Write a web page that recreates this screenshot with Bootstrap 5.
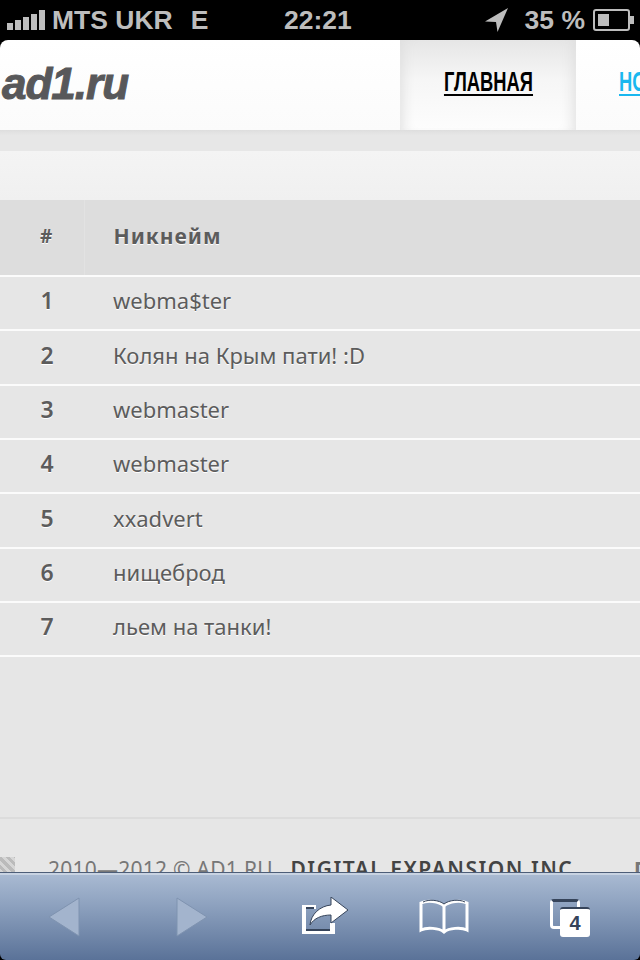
<!DOCTYPE html>
<html lang="ru">
<head>
  <meta charset="UTF-8">
  <title>ad1.ru</title>
  <meta name="viewport" content="width=device-width, initial-scale=1">
  <link href="https://cdn.jsdelivr.net/npm/bootstrap@5.3.2/dist/css/bootstrap.min.css" rel="stylesheet">
  <style>
    html, body { height: 960px; overflow: hidden; background: #000; }
    body { font-family: "Noto Sans", "Liberation Sans", sans-serif; }
    .phone { width: 640px; height: 960px; }

    .status-bar { height: 40px; background: #000; color: #bdbdbd; font: bold 26.5px/40px "Liberation Sans", Arial, sans-serif; padding: 0 5px 0 7px; }
    .status-left { width: 277px; flex-shrink: 0; }
    .status-time { width: 110px; flex-shrink: 0; }
    .status-right { flex: 1; }
    .signal { gap: 2px; height: 20px; margin-right: 7px; }
    .signal i { display: block; width: 6px; background: #bdbdbd; }
    .net-type { margin-left: 18px; }

    .site-head { height: 90px; background: linear-gradient(#fff, #fbfbfb); border-radius: 8px 8px 0 0; overflow: hidden; flex-shrink: 0; }
    .site-logo { width: 400px; flex-shrink: 0; color: #58585a; font: italic bold 44px/88px "Liberation Sans", Arial, sans-serif; letter-spacing: -1px; padding-left: 2px; -webkit-text-stroke: 1px #58585a; }
    .menu-item { height: 90px; flex-shrink: 0; font: bold 27px/84px "Liberation Sans", sans-serif; }
    .menu-active { width: 176px; text-align: center; color: #000; background: linear-gradient(#e6e6e6, #f6f6f6 45%, #fdfdfd); box-shadow: inset 12px 0 14px -10px #dedede, inset -12px 0 14px -10px #dedede; }
    .menu-active span { text-decoration: underline; text-underline-offset: 3px; transform: scaleX(.68); display: inline-block; }
    .menu-link { color: #1ab7ef; padding-left: 43px; white-space: nowrap; }
    .menu-link span { text-decoration: underline; text-underline-offset: 3px; display: inline-block; transform: scaleX(.68); transform-origin: left center; }

    .page-body { background: #e6e6e6; flex: 1; min-height: 0; overflow: hidden; }
    .top-band { height: 21px; background: linear-gradient(#dedede, #e7e7e7 25%); }
    .search-band { height: 49px; background: linear-gradient(#f4f4f4, #f0f0f0); }

    .nick-table { width: 640px; table-layout: fixed; margin: 0; color: #5c5c5c; font-size: 22px; }
    .nick-table th, .nick-table td { background: transparent; color: inherit; padding: 0; vertical-align: middle; border: 0; border-bottom: 2px solid #fbfbfb; text-shadow: 0 1px 0 #fff; box-shadow: none; }
    .nick-table thead th { height: 76px; background: #dddddd; font-size: 21px; font-weight: bold; letter-spacing: 1px; padding-bottom: 2px; }
    .nick-table tbody td { height: 54.35px; padding-bottom: 5px; }
    .nick-num { width: 84px; text-align: center; padding-left: 10px !important; font-weight: 600; font-size: 23px; }
    .nick-table thead .nick-num { border-right: 1px solid #e2e2e2; font-size: 19px; }
    .nick-name { padding-left: 29px !important; }

    .foot-rule { margin-top: 160px; border-top: 2px solid #dcdcdc; padding: 37px 0 0 48px; white-space: nowrap; color: #777; font-size: 21px; line-height: 26px; position: relative; letter-spacing: .25px; }
    .foot-rule b { color: #444; letter-spacing: 1.5px; margin-left: 12px; font-weight: 600; }
    .foot-mark { position: absolute; left: 0; top: 38px; width: 15px; height: 20px; background: repeating-linear-gradient(45deg, #bbb 0 3px, #d6d6d6 3px 6px); }
    .foot-end { position: absolute; left: 634px; top: 37px; color: #777; font-weight: bold; }

    .safari-bar { height: 88px; flex-shrink: 0; background: linear-gradient(#aabbd3, #8fa3c0 35%, #5a7298); border-top: 1px solid #4d5e78; box-shadow: inset 0 2px 0 #c8d3e2; border-radius: 0 0 6px 6px; }
    .safari-btn { width: 128px; text-align: center; }
    .share-btn { padding-left: 10px; }
    .book-btn { padding-right: 8px; }
    .tab-count { position: absolute; left: 13px; top: 11px; width: 30px; height: 30px; background: #fff; border-radius: 3px; border-top: 2px solid #36445a; color: #36445a; font: bold 20px/28px "Liberation Sans", Arial, sans-serif; text-align: center; }
    .tab-icon { width: 44px; height: 42px; margin-right: 14px; }
    .tab-back { position: absolute; left: 3px; top: 3px; width: 30px; height: 30px; border: 3px solid #fff; border-top-color: #36445a; border-radius: 4px; }
  </style>
</head>
<body>
  <div class="phone d-flex flex-column">

    <!-- Status bar -->
    <div class="status-bar d-flex align-items-center flex-shrink-0">
      <div class="status-left d-flex align-items-center">
        <div class="signal d-flex align-items-end">
          <i style="height: 7px"></i><i style="height: 10px"></i><i style="height: 13px"></i><i style="height: 16px"></i><i style="height: 20px"></i>
        </div>
        <span>MTS UKR</span>
        <span class="net-type">E</span>
      </div>
      <div class="status-time">22:21</div>
      <div class="status-right d-flex align-items-center justify-content-end">
        <svg width="24" height="24" viewBox="0 0 24 24" class="me-3"><path d="M23 0 0 13.500l11 .5 1.500 10z" fill="#bdbdbd"/></svg>
        <span class="me-2">35 %</span>
        <svg width="42" height="22" viewBox="0 0 42 22"><rect x="1" y="1" width="35" height="20" rx="2" fill="none" stroke="#bdbdbd" stroke-width="2"/><rect x="5" y="5" width="11" height="12" fill="#bdbdbd"/><rect x="37" y="7" width="4" height="8" fill="#bdbdbd"/></svg>
      </div>
    </div>

    <!-- Site header -->
    <div class="site-head d-flex">
      <div class="site-logo">ad1.ru</div>
      <div class="menu-item menu-active"><span>ГЛАВНАЯ</span></div>
      <div class="menu-item menu-link"><span>НОВОСТИ</span></div>
    </div>

    <div class="page-body">
      <div class="top-band"></div>
      <div class="search-band"></div>

      <table class="table nick-table">
        <thead>
          <tr><th class="nick-num">#</th><th class="nick-name">Никнейм</th></tr>
        </thead>
        <tbody>
          <tr><td class="nick-num">1</td><td class="nick-name">webma$ter</td></tr>
          <tr><td class="nick-num">2</td><td class="nick-name">Колян на Крым пати! :D</td></tr>
          <tr><td class="nick-num">3</td><td class="nick-name">webmaster</td></tr>
          <tr><td class="nick-num">4</td><td class="nick-name">webmaster</td></tr>
          <tr><td class="nick-num">5</td><td class="nick-name">xxadvert</td></tr>
          <tr><td class="nick-num">6</td><td class="nick-name">нищеброд</td></tr>
          <tr><td class="nick-num">7</td><td class="nick-name">льем на танки!</td></tr>
        </tbody>
      </table>

      <div class="foot-rule">
        <div class="foot-mark"></div>
        2010—2012 © AD1.RU <b>DIGITAL EXPANSION INC</b>
        <div class="foot-end">D</div>
      </div>
    </div>

    <!-- Safari toolbar -->
    <div class="safari-bar d-flex align-items-center">
      <div class="safari-btn">
        <svg width="34" height="40" viewBox="0 0 34 40"><path d="M32 1V39L2 20z" fill="#a3b4cd" stroke="#7f93b0" stroke-width="1"/></svg>
      </div>
      <div class="safari-btn">
        <svg width="34" height="40" viewBox="0 0 34 40"><path d="M2 1V39L32 20z" fill="#a3b4cd" stroke="#7f93b0" stroke-width="1"/></svg>
      </div>
      <div class="safari-btn share-btn">
        <svg width="50" height="40" viewBox="0 0 50 40"><path d="M2 8H16V12H6V32H30V26H35V37H2z" fill="#fff"/><path d="M6 11H14M6 33H30" stroke="#36445a" stroke-width="2"/><path d="M31 0 48 13 31 26V18C22 18 14 21 10 28 11 17 20 9 31 8z" fill="#fff" stroke="#36445a" stroke-width="1"/></svg>
      </div>
      <div class="safari-btn book-btn">
        <svg width="50" height="36" viewBox="0 0 50 36"><path d="M25 7C20 2 8 1 2 4V31C8 28 20 29 25 33 30 29 42 28 48 31V4C42 1 30 2 25 7zM25 7V33" fill="none" stroke="#fff" stroke-width="3"/><path d="M4 3C10 0 20 1 25 5 30 1 40 0 46 3" fill="none" stroke="#36445a" stroke-width="1"/></svg>
      </div>
      <div class="safari-btn d-flex justify-content-center">
        <div class="tab-icon position-relative">
          <div class="tab-back"></div>
          <div class="tab-count">4</div>
        </div>
      </div>
    </div>
  </div>

  <script src="https://cdn.jsdelivr.net/npm/bootstrap@5.3.2/dist/js/bootstrap.bundle.min.js"></script>
</body>
</html>
